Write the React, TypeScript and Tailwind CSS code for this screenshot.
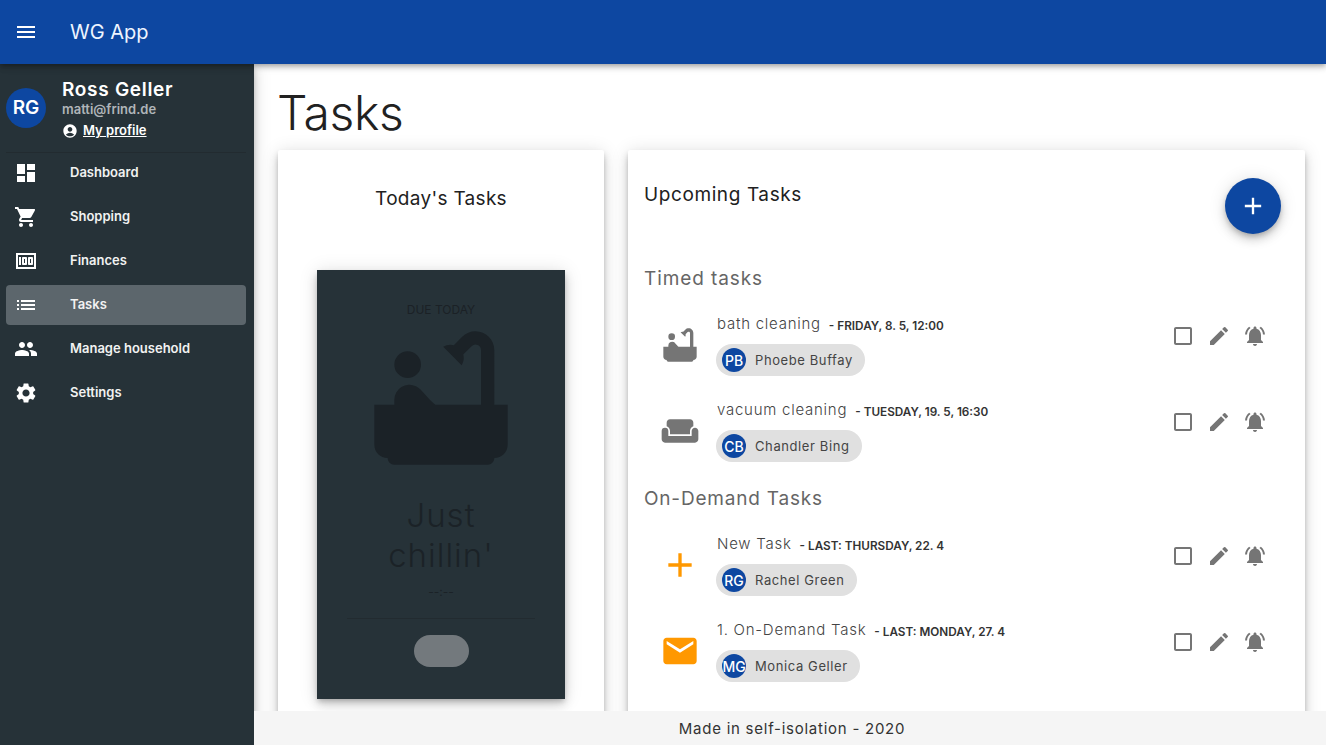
import { MdMenu, MdDashboard, MdShoppingCart, MdMoney, MdList, MdPeople, MdSettings, MdAccountCircle, MdBathtub, MdWeekend, MdAdd, MdEmail, MdCheckBoxOutlineBlank, MdEdit, MdNotificationsActive } from 'react-icons/md'
import type { IconType } from 'react-icons'

const navItems: { icon: IconType; label: string; active?: boolean }[] = [
  { icon: MdDashboard, label: 'Dashboard' },
  { icon: MdShoppingCart, label: 'Shopping' },
  { icon: MdMoney, label: 'Finances' },
  { icon: MdList, label: 'Tasks', active: true },
  { icon: MdPeople, label: 'Manage household' },
  { icon: MdSettings, label: 'Settings' },
]

function TaskRow({ icon: Icon, iconClass, title, due, initials, name }: { icon: IconType; iconClass: string; title: string; due: string; initials: string; name: string }) {
  return (
    <div className="flex h-[86px] items-center pl-8 pr-[38px]">
      <div className="flex w-[56px] shrink-0 pt-[1px]">
        <Icon size={40} className={iconClass} />
      </div>
      <div className="flex-1">
        <div className="ml-px flex h-[24px] items-center">
          <span className="text-[15px] font-light tracking-[0.75px] text-[#444]">{title}</span>
          <span className="ml-2 mt-[5px] text-[11.75px] font-semibold uppercase text-[#333]">- {due}</span>
        </div>
        <div className="mt-2 flex h-8 w-fit items-center rounded-full bg-[#e0e0e0] pl-[6px] pr-3">
          <div className="flex h-6 w-6 items-center justify-center rounded-full bg-[#0d47a1] text-[14px] font-medium text-white">{initials}</div>
          <span className="ml-[9px] pt-[2px] text-[13px] tracking-[0.6px] text-[#444]">{name}</span>
        </div>
      </div>
      <div className="mb-4 flex items-center gap-3 text-[#757575]">
        <MdCheckBoxOutlineBlank size={24} />
        <MdEdit size={24} />
        <MdNotificationsActive size={24} />
      </div>
    </div>
  )
}

export default function App() {
  return (
    <div className="flex h-[745px] w-[1326px] flex-col overflow-hidden bg-white font-['Inter',sans-serif]">
      <header className="relative z-20 flex h-16 shrink-0 items-center bg-[#0d47a1] shadow-[0_2px_4px_-1px_rgba(0,0,0,0.2),0_4px_5px_0_rgba(0,0,0,0.14),0_1px_10px_0_rgba(0,0,0,0.12)]">
        <MdMenu size={24} className="ml-[14px] text-white" />
        <span className="ml-[32px] text-[20px] text-[#eef5ff]">WG App</span>
      </header>

      <div className="flex min-h-0 flex-1">
        <aside className="relative z-10 w-[254px] shrink-0 bg-[#263238] shadow-[0_3px_5px_-1px_rgba(0,0,0,0.2),0_6px_10px_0_rgba(0,0,0,0.14),0_1px_18px_0_rgba(0,0,0,0.12)]">
          <div className="ml-[6px] mr-2 flex h-[89px] items-center border-b border-[#222b30]">
            <div className="flex h-10 w-10 shrink-0 items-center justify-center rounded-full bg-[#0d47a1] text-[19px] font-semibold text-white">RG</div>
            <div className="ml-4 pt-[3px]">
              <div className="text-[19px] font-semibold leading-[24px] tracking-[0.7px] text-white">Ross Geller</div>
              <div className="mt-[-2px] text-[13px] font-semibold leading-[18px] text-[#b0b5b8]">matti@frind.de</div>
              <div className="mt-[3px] flex items-center gap-[5px]">
                <MdAccountCircle size={16} className="text-white" />
                <span className="text-[13px] font-semibold text-white underline">My profile</span>
              </div>
            </div>
          </div>
          <nav className="pl-[6px] pr-2">
            {navItems.map(({ icon: Icon, label, active }) => (
              <div key={label} className={`mb-[4px] flex h-10 items-center rounded-[4px] ${active ? 'bg-[#5c666c]' : ''}`}>
                <Icon size={24} className="ml-2 text-white" />
                <span className="ml-[32px] text-[13px] font-semibold text-[#f2f2f2]">{label}</span>
              </div>
            ))}
          </nav>
        </aside>

        <div className="flex min-w-0 flex-1 flex-col">
          <main className="min-h-0 flex-1 overflow-hidden pl-6 pr-[21px]">
            <h1 className="ml-[-1px] h-[86px] pt-[16px] text-[48px] font-light leading-[66px] tracking-[-0.4px] text-[#212121]">Tasks</h1>
            <div className="flex gap-6">
              <section className="flex h-[640px] w-[326px] shrink-0 flex-col items-center rounded-[2px] bg-white shadow-[0_3px_5px_-1px_rgba(0,0,0,0.2),0_6px_10px_0_rgba(0,0,0,0.14),0_1px_18px_0_rgba(0,0,0,0.12)]">
                <h2 className="mt-[35px] h-[28px] text-[19px] leading-[28px] tracking-[0.3px] text-[#212121]">Today's Tasks</h2>
                <div className="mt-[57px] flex h-[429px] w-[248px] flex-col items-center bg-[#263238] shadow-[0_3px_5px_-1px_rgba(0,0,0,0.2),0_6px_10px_0_rgba(0,0,0,0.14),0_1px_18px_0_rgba(0,0,0,0.12)]">
                  <div className="mt-[31px] text-[12px] text-[#1b2126]">DUE TODAY</div>
                  <MdBathtub size={160} className="mt-[-1px] shrink-0 text-[#1b2227]" />
                  <div className="mt-[17px] w-[160px] text-center text-[33px] font-light leading-[40px] tracking-[1px] text-[#1b2227]">Just chillin'</div>
                  <div className="mt-2 text-[12px] text-[#1b2227]">--:--</div>
                  <div className="mt-[17px] h-px w-[188px] bg-[#222b30]" />
                  <div className="mt-4 h-8 w-[55px] rounded-full bg-[#73797d]" />
                </div>
              </section>

              <section className="relative h-[640px] min-w-0 flex-1 rounded-[2px] bg-white shadow-[0_3px_5px_-1px_rgba(0,0,0,0.2),0_6px_10px_0_rgba(0,0,0,0.14),0_1px_18px_0_rgba(0,0,0,0.12)]">
                <h2 className="ml-4 pt-[31px] text-[19px] leading-[28px] tracking-[0.6px] text-[#212121]">Upcoming Tasks</h2>
                <button className="absolute right-6 top-7 flex h-14 w-14 items-center justify-center rounded-full bg-[#0d47a1] text-white shadow-[0_3px_5px_-1px_rgba(0,0,0,0.2),0_6px_10px_0_rgba(0,0,0,0.14),0_1px_18px_0_rgba(0,0,0,0.12)]">
                  <MdAdd size={28} />
                </button>
                <h3 className="ml-4 mt-[56px] text-[19px] leading-[28px] tracking-[0.9px] text-[#666]">Timed tasks</h3>
                <div className="mt-[8px]">
                  <TaskRow icon={MdBathtub} iconClass="text-[#757575]" title="bath cleaning" due="Friday, 8. 5, 12:00" initials="PB" name="Phoebe Buffay" />
                  <TaskRow icon={MdWeekend} iconClass="text-[#757575]" title="vacuum cleaning" due="Tuesday, 19. 5, 16:30" initials="CB" name="Chandler Bing" />
                </div>
                <h3 className="ml-4 mt-[12px] text-[19px] leading-[28px] tracking-[0.8px] text-[#666]">On-Demand Tasks</h3>
                <div className="mt-[8px]">
                  <TaskRow icon={MdAdd} iconClass="text-[#ff9800]" title="New Task" due="Last: Thursday, 22. 4" initials="RG" name="Rachel Green" />
                  <TaskRow icon={MdEmail} iconClass="text-[#ff9800]" title="1. On-Demand Task" due="Last: Monday, 27. 4" initials="MG" name="Monica Geller" />
                </div>
              </section>
            </div>
          </main>
          <footer className="relative z-10 flex h-[34px] shrink-0 items-center justify-center bg-[#f5f5f5] pl-[4px] pt-[2px] text-[15px] tracking-[0.75px] text-[#333]">
            Made in self-isolation - 2020
          </footer>
        </div>
      </div>
    </div>
  )
}
